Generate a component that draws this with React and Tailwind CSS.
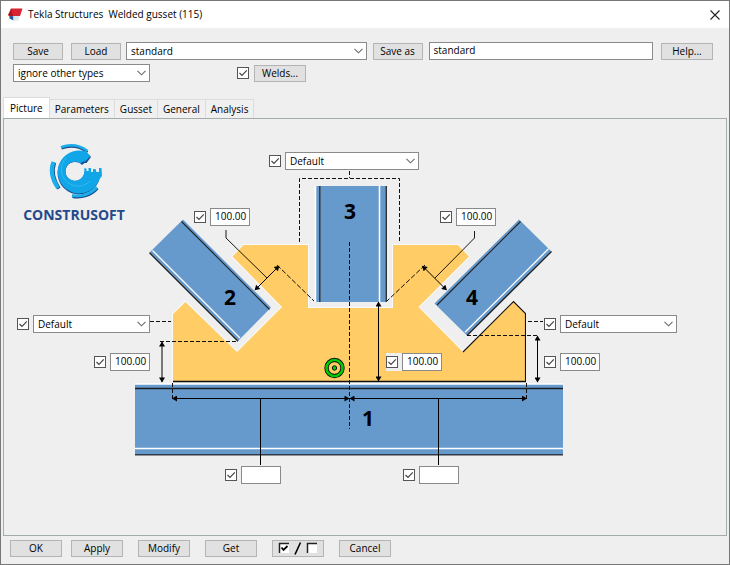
import { useState } from "react";

const Chevron = () => (
  <svg
    className="pointer-events-none absolute right-1 top-1/2 -translate-y-1/2"
    width="9"
    height="6"
    viewBox="0 0 9 6"
    aria-hidden="true"
  >
    <path d="M0.5 0.8 L4.5 4.8 L8.5 0.8" fill="none" stroke="#6a6a6a" strokeWidth="1.1" />
  </svg>
);

const CheckBox = ({ label }) => {
  const [checked, setChecked] = useState(true);

  return (
    <span className="relative flex h-3 w-3 shrink-0">
      <input
        type="checkbox"
        aria-label={label}
        checked={checked}
        onChange={() => setChecked(!checked)}
        className="h-3 w-3 appearance-none border border-[#555] bg-white"
      />
      {checked && (
        <svg className="pointer-events-none absolute inset-0" width="12" height="12" viewBox="0 0 12 12" aria-hidden="true">
          <path d="M2.5 6 L5 8.5 L9.8 3.4" fill="none" stroke="#444" strokeWidth="1.2" />
        </svg>
      )}
    </span>
  );
};

const Button = ({ children, className = "w-[52px]", label }) => (
  <button
    type="button"
    aria-label={label}
    className={`flex h-[17px] shrink-0 items-center justify-center border border-[#b4b4b4] bg-[#e1e1e1] leading-[15px] ${className}`}
  >
    {children}
  </button>
);

const Select = ({ label, value, className }) => (
  <span className={`relative block h-[18px] ${className}`}>
    <select
      aria-label={label}
      defaultValue={value}
      className="block h-[18px] w-full appearance-none rounded-none border border-[#8a8a8a] bg-white pl-1 pr-4 leading-4"
    >
      <option>{value}</option>
    </select>
    <Chevron />
  </span>
);

const TextBox = ({ label, value, className }) => (
  <input
    type="text"
    aria-label={label}
    defaultValue={value}
    className={`h-[18px] rounded-none border border-[#8a8a8a] bg-white pb-[2px] pl-1 leading-[14px] ${className}`}
  />
);

// Check box and value box placed on the drawing
const fields = [
  { label: "Member 3 end", place: "left-[265px] top-[33px]", value: "Default", wide: "w-[134px]" },
  { label: "Left plate corner", place: "left-[13px] top-[196px]", value: "Default", wide: "w-[117px]" },
  { label: "Right plate corner", place: "left-[540px] top-[196px]", value: "Default", wide: "w-[117px]" },
  { label: "Clearance 2", place: "left-[190px] top-[89px]", value: "100.00" },
  { label: "Clearance 4", place: "left-[436px] top-[89px]", value: "100.00" },
  { label: "Left height", place: "left-[90px] top-[234px]", value: "100.00" },
  { label: "Middle height", place: "left-[382px] top-[234px] bg-[#efefef]", value: "100.00" },
  { label: "Right height", place: "left-[540px] top-[234px]", value: "100.00" },
  { label: "Left length", place: "left-[221px] top-[347px]", value: "" },
  { label: "Right length", place: "left-[399px] top-[347px]", value: "" },
];

const Drawing = () => (
  <svg className="block" width="700" height="400" viewBox="4 119 700 400" role="img" aria-label="Welded gusset">
    <defs>
      <marker id="arrow" viewBox="0 0 6 6" refX="5" refY="3" markerWidth="6" markerHeight="6" markerUnits="userSpaceOnUse" orient="auto-start-reverse">
        <path d="M0.5 0 L5.5 3 L0.5 6 Z" fill="#000" />
      </marker>
    </defs>

    {/* gusset plate */}
    <path
      d="M173 381 V314 L185.5 302 L237 352 L282 307 L232.5 256.5 L243.5 245 H308 V308 H393 V245 H458 L469 256.5 L418.5 307 L463 352 L514 301 L526 314 V381 Z"
      fill="#ffcc66"
      stroke="#fafafa"
      strokeWidth="2"
      paintOrder="stroke"
    />
    <path d="M463 352 L513.5 301.5 L525.5 313.5 V381" fill="none" stroke="#111" strokeWidth="1.1" />
    <path d="M173 381.5 H526" stroke="#111" strokeWidth="1.4" />

    {/* member 1 */}
    <path d="M135 384 H563 V455 H135 Z" fill="#6699cc" />
    <path d="M135 384 H563 M135 448.5 H563" stroke="#fff" strokeWidth="1.4" />
    <path d="M135 388.5 H563" stroke="#1c2128" strokeWidth="1.4" />
    <path d="M135 454.8 H563" stroke="#333b45" strokeWidth="1.6" />

    {/* member 3 */}
    <path d="M316 186 H387 V302 H316 Z" fill="#6699cc" />
    <path d="M315.5 186 V302 M379.5 186 V302" stroke="#fff" strokeWidth="1.6" />
    <path d="M319.8 186 V302 M386.3 186 V302" stroke="#333" strokeWidth="1.4" />

    {/* member 2 */}
    <path d="M183 219.5 L271 307.5 L238 341 L149.5 252.5 Z" fill="#6699cc" />
    <path d="M181.5 221.5 L269.5 309.5" stroke="#222" strokeWidth="1.1" />
    <path d="M152.5 250.5 L240 338" stroke="#fff" strokeWidth="1.3" />
    <path d="M149.5 252.8 L238 341.3" stroke="#222" strokeWidth="1.3" />

    {/* member 4 */}
    <path d="M519 219.5 L551.5 251.5 L467 335.5 L434.5 303.5 Z" fill="#6699cc" />
    <path d="M520.5 221.5 L437 305" stroke="#222" strokeWidth="1.1" />
    <path d="M548.5 248.8 L465 332.3" stroke="#fff" strokeWidth="1.3" />
    <path d="M551.5 251.5 L467 335.5" stroke="#222" strokeWidth="1.3" />

    {/* dashed lines */}
    <g fill="none" stroke="#111" strokeWidth="1" strokeDasharray="4 2">
      <path d="M349.5 171 V178" />
      <path d="M299.5 242 V178.5 H399.5 V242" />
      <path d="M349.5 242 V429" />
      <path d="M150 321.5 H171 M528 321.5 H543" />
      <path d="M160 341.5 H238 M467 335.5 H539" />
      <path d="M277 265 L314 301 M425 265 L387 301" strokeDasharray="5 2" />
      <path d="M172.5 383 V401 M526.5 383 V401" />
    </g>

    {/* dimension lines */}
    <g fill="none" stroke="#000" strokeWidth="1">
      <path d="M162 342 V382" markerStart="url(#arrow)" markerEnd="url(#arrow)" />
      <path d="M537.5 336 V382" markerStart="url(#arrow)" markerEnd="url(#arrow)" />
      <path d="M378.5 302 V381" markerStart="url(#arrow)" markerEnd="url(#arrow)" />
      <path d="M255 290 L279 266" markerStart="url(#arrow)" markerEnd="url(#arrow)" />
      <path d="M446.5 290 L422.5 266" markerStart="url(#arrow)" markerEnd="url(#arrow)" />
      <path d="M172.5 398.5 H349" markerStart="url(#arrow)" markerEnd="url(#arrow)" />
      <path d="M350 398.5 H526.5" markerStart="url(#arrow)" markerEnd="url(#arrow)" />
      <path d="M226 230 V238 L267 278 M474.5 231 V238 L435 278" strokeWidth="0.9" />
      <path d="M260.5 399 V465 M438.5 399 V465" />
    </g>

    {/* origin marker */}
    <circle cx="334.5" cy="368" r="8" fill="none" stroke="#111" strokeWidth="4.4" />
    <circle cx="334.5" cy="368" r="6.2" fill="#ffcc66" />
    <circle cx="334.5" cy="368" r="8" fill="none" stroke="#00cc00" strokeWidth="2.6" />
    <circle cx="334.5" cy="368" r="6.2" fill="none" stroke="#111" strokeWidth="0.8" />
    <circle cx="334.5" cy="368" r="2.2" fill="#00cc00" stroke="#111" strokeWidth="1" />

    <g fontSize="21" fontWeight="700" textAnchor="middle" fill="#000">
      <text x="350" y="219">3</text>
      <text x="230" y="305">2</text>
      <text x="472" y="305">4</text>
      <text x="368" y="426">1</text>
    </g>

    {/* company logo */}
    <g fill="none">
      <g stroke="#1d4f91">
        <path d="M61.5 148.3 A28 28 0 0 1 87.5 152.3" strokeWidth="2.6" />
        <path d="M54.5 162.5 Q50 174 59 188.5" strokeWidth="3.5" />
        <path d="M72.5 196.6 A27 27 0 0 0 97.5 188.3" strokeWidth="2.8" />
      </g>
      <path
        d="M82 165 L84.5 163 L86.5 163 L91 157 L87 153 A21.5 21.5 0 1 0 100.5 173 L97 172 L84.5 172 A9.5 9.5 0 1 1 82 165 Z"
        fill="#1d4f91"
      />
      <g stroke="#1aaeea">
        <path d="M61 147.3 A28 28 0 0 1 87.5 151" strokeWidth="2.6" />
        <path d="M53.5 162 Q48.500 174 58 188" strokeWidth="4" />
        <path d="M72 195.4 A27 27 0 0 0 97 187.3" strokeWidth="2.8" />
      </g>
      <path
        d="M80.500 163.500 L83 161.5 L85 161.5 L90.500 156 L86 151.500 A21.500 21.500 0 1 0 99.500 179 L102 176 L101.500 168 L99 168 V172 L96.500 172 L95.500 169 L93 169 V172 L91 172 V168 L88.500 168 V171 L86.500 171 V168.500 L84 168.500 A9.500 9.500 0 1 1 80.500 163.500 Z"
        fill="#10a6e8"
      />
      <path d="M66 158 A15 15 0 0 0 90 181" stroke="#35baf1" strokeWidth="1" />
    </g>
    <text x="74" y="220" textAnchor="middle" fontSize="14" fontWeight="700" fill="#25498a">
      CONSTRUSOFT
    </text>
  </svg>
);

const tabs = ["Picture", "Parameters", "Gusset", "General", "Analysis"];

const App = () => {
  const [activeTab, setActiveTab] = useState("Picture");

  return (
    <div className="flex min-h-screen flex-col border border-[#777] bg-[#efefef] font-['Open_Sans','Noto_Sans',sans-serif] text-[10px] text-black">
      {/* Title bar */}
      <header className="flex h-[27px] items-center bg-white pl-[7px] pr-[9px]">
        <svg width="15" height="13" viewBox="0 0 15 13" aria-hidden="true">
          <path d="M3 0.5 H14.5 L12 8 H2 Z" fill="#d92231" />
          <path d="M3 0.5 L0 7 L2 9 L5 8 Z" fill="#b3121f" />
          <path d="M1.5 8.5 L5.500 8 V12.5 L1.5 10.5 Z" fill="#1c5a9c" />
          <path d="M5.500 8 H11.5 L10.5 12.5 H5.500 Z" fill="#dbe5ef" />
        </svg>
        <h1 className="ml-[5px] whitespace-pre">Tekla Structures  Welded gusset (115)</h1>
        <button type="button" aria-label="Close" className="ml-auto">
          <svg width="10" height="10" viewBox="0 0 10 10" aria-hidden="true">
            <path d="M0.5 0.5 L9.5 9.5 M9.5 0.5 L0.5 9.5" stroke="#222" strokeWidth="1.1" />
          </svg>
        </button>
      </header>

      {/* Toolbar */}
      <div className="flex flex-col gap-1 px-3 pt-[14px]">
        <div className="flex items-center pr-1">
          <Button className="w-[50px]">Save</Button>
          <Button className="ml-2 w-[50px]">Load</Button>
          <Select label="Saved settings" value="standard" className="ml-[5px] min-w-0 grow basis-60" />
          <Button className="ml-[6px] w-[50px]">Save as</Button>
          <TextBox label="Save as name" value="standard" className="ml-[6px] min-w-0 grow basis-56" />
          <Button className="ml-2 w-[52px]">Help...</Button>
        </div>
        <div className="flex items-center">
          <Select label="Type filter" value="ignore other types" className="w-[137px]" />
          <span className="ml-[87px] flex items-center gap-[5px]">
            <CheckBox label="Use welds" />
            <Button>Welds...</Button>
          </span>
        </div>
      </div>

      {/* Tabs */}
      <div role="tablist" className="mt-[15px] flex items-end pl-[2px]">
        {tabs.map((tab) => (
          <button
            key={tab}
            type="button"
            role="tab"
            aria-selected={tab === activeTab}
            onClick={() => setActiveTab(tab)}
            className={
              tab === activeTab
                ? "h-[21px] border-x border-t border-[#dcdcdc] bg-white px-[6px]"
                : "h-[19px] border-r border-t border-[#dcdcdc] bg-[#f0f0f0] px-[5px]"
            }
          >
            {tab}
          </button>
        ))}
      </div>

      <main role="tabpanel" className="mx-[2px] flex-1 border border-[#a3acac]">
        <div className="relative">
          <Drawing />
          {fields.map((field) => (
            <div key={field.label} className={`absolute flex items-center gap-1 ${field.place}`}>
              <CheckBox label={`Use ${field.label}`} />
              {field.wide ? (
                <Select label={field.label} value={field.value} className={field.wide} />
              ) : (
                <TextBox label={field.label} value={field.value} className="w-10" />
              )}
            </div>
          ))}
        </div>
      </main>

      {/* Bottom buttons */}
      <footer className="flex gap-[15px] px-[9px] pb-[7px] pt-1">
        <div className="flex gap-[9px]">
          <Button>OK</Button>
          <Button>Apply</Button>
        </div>
        <Button>Modify</Button>
        <Button>Get</Button>
        <Button label="Toggle all check boxes">
          <svg width="40" height="13" viewBox="0 0 40 13" aria-hidden="true">
            <path d="M1 1 H11 V11 H1 Z M29 1 H39 V11 H29 Z" fill="#fff" />
            <path d="M1.5 11 V1.5 H11 M29.5 11 V1.5 H39" fill="none" stroke="#222" strokeWidth="1.5" />
            <path d="M3.5 5.5 L5.5 8 L9.5 4" fill="none" stroke="#000" strokeWidth="1.8" />
            <path d="M22.5 0.5 L17 12.5" stroke="#000" strokeWidth="1.6" />
          </svg>
        </Button>
        <Button>Cancel</Button>
      </footer>
    </div>
  );
};

export default App;
